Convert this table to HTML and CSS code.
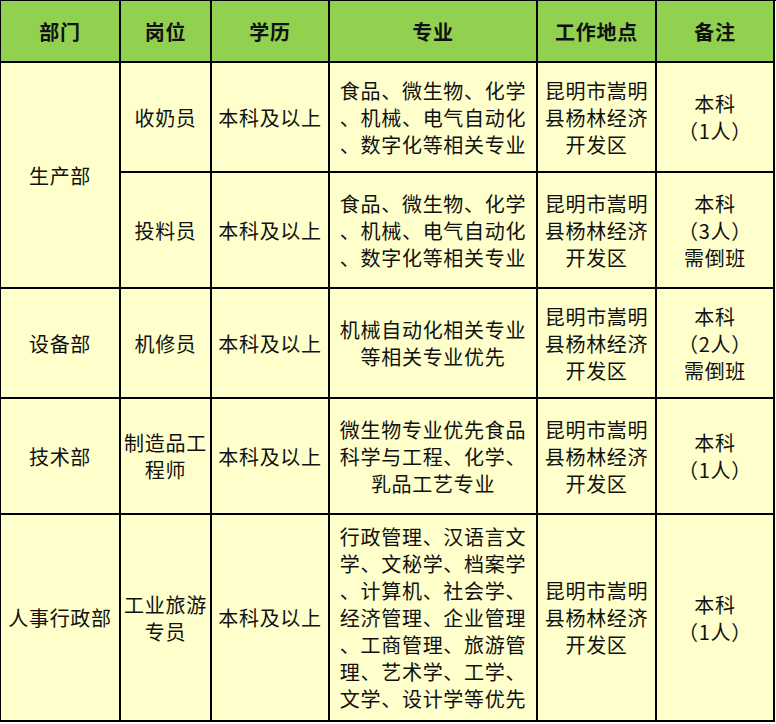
FILE: index.html
```html
<!DOCTYPE html>
<html lang="zh">
<head>
<meta charset="utf-8">
<title>招聘岗位</title>
<link rel="stylesheet" href="styles.css">
</head>
<body>
<div class="grid">
  <div class="cell head">部门</div>
  <div class="cell head">岗位</div>
  <div class="cell head">学历</div>
  <div class="cell head">专业</div>
  <div class="cell head">工作地点</div>
  <div class="cell head">备注</div>

  <div class="cell span2">生产部</div>
  <div class="cell">收奶员</div>
  <div class="cell">本科及以上</div>
  <div class="cell">食品、微生物、化学<br>、机械、电气自动化<br>、数字化等相关专业</div>
  <div class="cell">昆明市嵩明<br>县杨林经济<br>开发区</div>
  <div class="cell">本科<br>（1人）</div>

  <div class="cell">投料员</div>
  <div class="cell">本科及以上</div>
  <div class="cell">食品、微生物、化学<br>、机械、电气自动化<br>、数字化等相关专业</div>
  <div class="cell">昆明市嵩明<br>县杨林经济<br>开发区</div>
  <div class="cell">本科<br>（3人）<br>需倒班</div>

  <div class="cell">设备部</div>
  <div class="cell">机修员</div>
  <div class="cell">本科及以上</div>
  <div class="cell">机械自动化相关专业<br>等相关专业优先</div>
  <div class="cell">昆明市嵩明<br>县杨林经济<br>开发区</div>
  <div class="cell">本科<br>（2人）<br>需倒班</div>

  <div class="cell">技术部</div>
  <div class="cell">制造品工<br>程师</div>
  <div class="cell">本科及以上</div>
  <div class="cell">微生物专业优先食品<br>科学与工程、化学、<br>乳品工艺专业</div>
  <div class="cell">昆明市嵩明<br>县杨林经济<br>开发区</div>
  <div class="cell">本科<br>（1人）</div>

  <div class="cell">人事行政部</div>
  <div class="cell">工业旅游<br>专员</div>
  <div class="cell">本科及以上</div>
  <div class="cell">行政管理、汉语言文<br>学、文秘学、档案学<br>、计算机、社会学、<br>经济管理、企业管理<br>、工商管理、旅游管<br>理、艺术学、工学、<br>文学、设计学等优先</div>
  <div class="cell">昆明市嵩明<br>县杨林经济<br>开发区</div>
  <div class="cell">本科<br>（1人）</div>
</div>
</body>
</html>
```

FILE: styles.css
```css
html, body {
  margin: 0;
  padding: 0;
  background: #ffffff;
}

body {
  font-family: "Noto Sans CJK SC", "Noto Sans", sans-serif;
  font-size: 20px;
  color: #111111;
}

.grid {
  display: grid;
  grid-template-columns: 120px 91px 118px 208px 119px 118px;
  grid-template-rows: 62px 110px 116px 110px 116px 207px;
  width: 775px;
  border-top: 1px solid #000;
  border-left: 1px solid #000;
}

.cell {
  box-sizing: border-box;
  border-right: 2px solid #000;
  border-bottom: 2px solid #000;
  background: #ffffcc;
  display: flex;
  align-items: center;
  justify-content: center;
  text-align: center;
  line-height: 27px;
  letter-spacing: 0.7px;
  white-space: nowrap;
  overflow: hidden;
}

.head {
  background: #92d050;
  font-weight: bold;
}

.span2 {
  grid-row: span 2;
}
```
